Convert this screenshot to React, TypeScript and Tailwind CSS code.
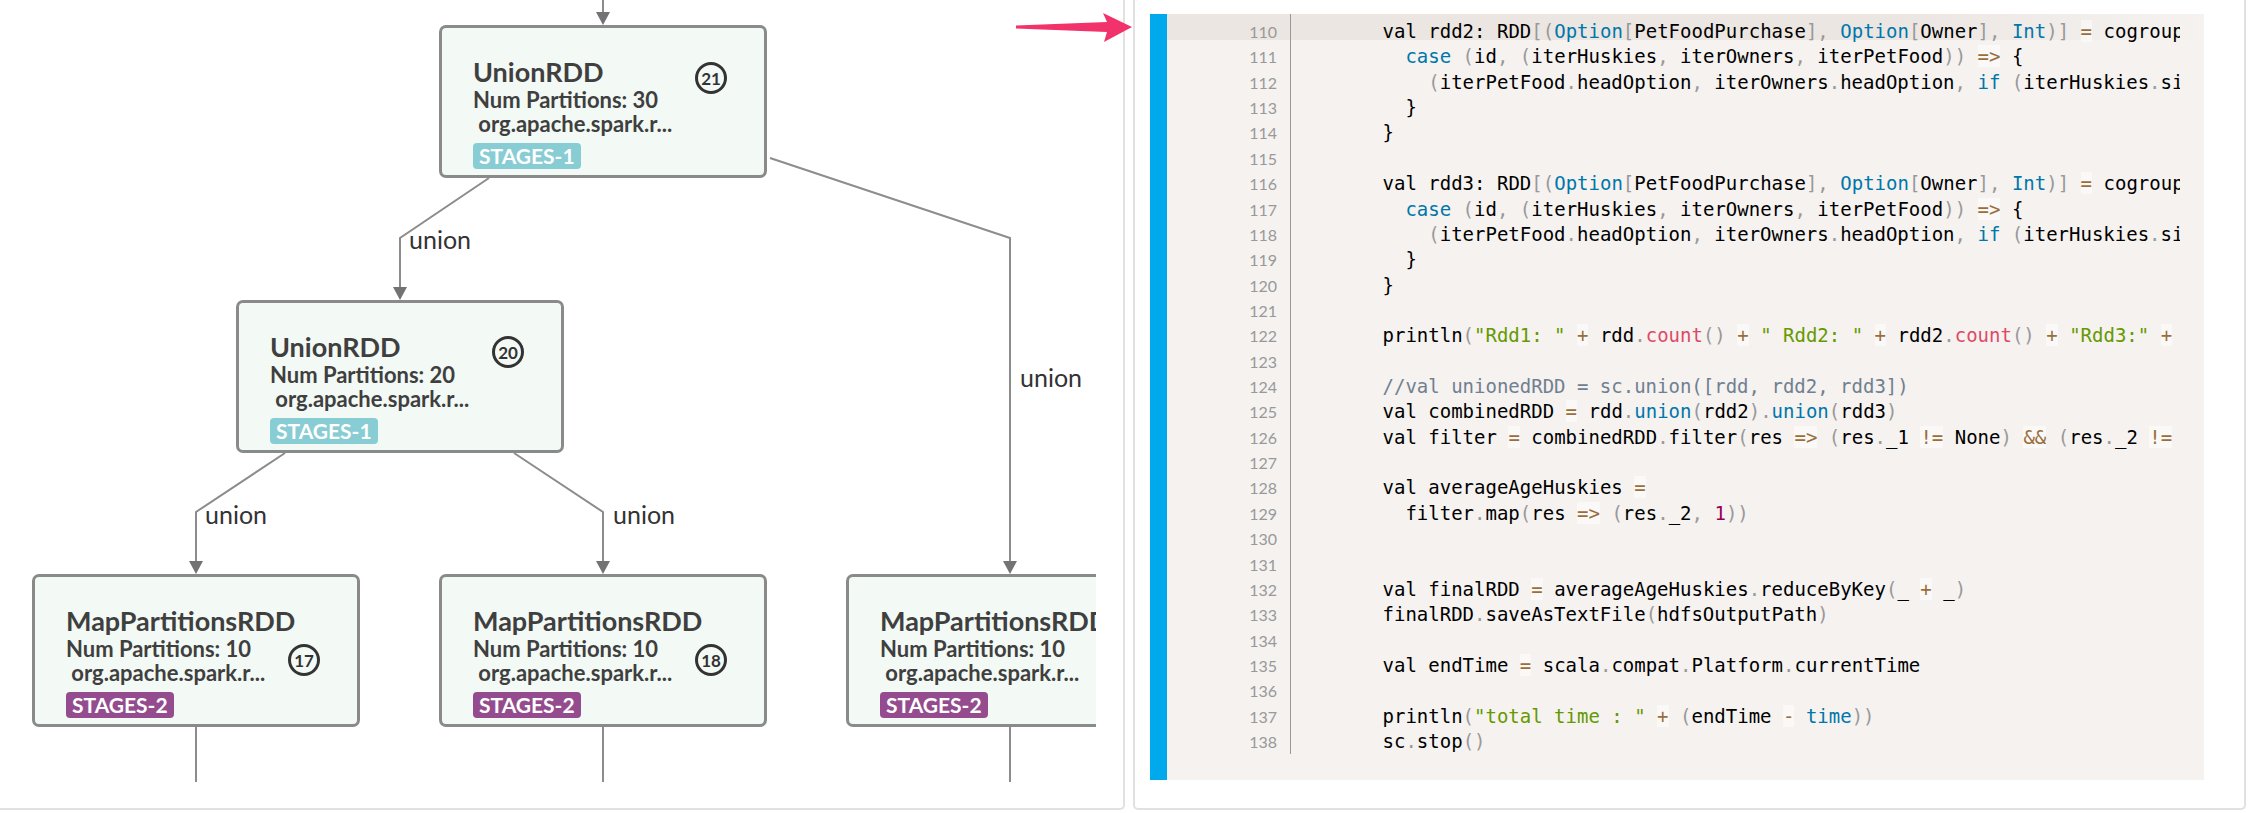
import React from "react"

type GraphNode = {
  x: number
  y: number
  title: string
  parts: number
  stage: 1 | 2
  num: number
  circleTop: number
}

const nodes: GraphNode[] = [
  { x: 439, y: 25, title: "UnionRDD", parts: 30, stage: 1, num: 21, circleTop: 34 },
  { x: 236, y: 300, title: "UnionRDD", parts: 20, stage: 1, num: 20, circleTop: 33 },
  { x: 32, y: 574, title: "MapPartitionsRDD", parts: 10, stage: 2, num: 17, circleTop: 67 },
  { x: 439, y: 574, title: "MapPartitionsRDD", parts: 10, stage: 2, num: 18, circleTop: 67 },
  { x: 846, y: 574, title: "MapPartitionsRDD", parts: 10, stage: 2, num: 16, circleTop: 67 },
]

const stageClass = {
  1: "bg-[#88ccd4]",
  2: "bg-[#944c8e]",
}

const edges = [
  "M603 0 V14",
  "M489 178 L400 238 L400 289",
  "M770 158 L1010 238 L1010 563",
  "M285 453 L196 512 L196 563",
  "M514 453 L603 512 L603 563",
  "M196 720 V782",
  "M603 720 V782",
  "M1010 720 V782",
]

const heads = [
  [603, 25],
  [400, 300],
  [196, 574],
  [603, 574],
  [1010, 574],
]

const labels = [
  [409, 249],
  [1020, 387],
  [205, 524],
  [613, 524],
]

const code = [
  "        val rdd2: RDD[(Option[PetFoodPurchase], Option[Owner], Int)] = cogroupedRDD.map {",
  "          case (id, (iterHuskies, iterOwners, iterPetFood)) => {",
  "            (iterPetFood.headOption, iterOwners.headOption, if (iterHuskies.size > 0) iterHuskies.head else None)",
  "          }",
  "        }",
  "",
  "        val rdd3: RDD[(Option[PetFoodPurchase], Option[Owner], Int)] = cogroupedRDD.map {",
  "          case (id, (iterHuskies, iterOwners, iterPetFood)) => {",
  "            (iterPetFood.headOption, iterOwners.headOption, if (iterHuskies.size > 0) iterHuskies.head else None)",
  "          }",
  "        }",
  "",
  '        println("Rdd1: " + rdd.count() + " Rdd2: " + rdd2.count() + "Rdd3:" + rdd3.count())',
  "",
  "        //val unionedRDD = sc.union([rdd, rdd2, rdd3])",
  "        val combinedRDD = rdd.union(rdd2).union(rdd3)",
  "        val filter = combinedRDD.filter(res => (res._1 != None) && (res._2 != None))",
  "",
  "        val averageAgeHuskies =",
  "          filter.map(res => (res._2, 1))",
  "",
  "",
  "        val finalRDD = averageAgeHuskies.reduceByKey(_ + _)",
  "        finalRDD.saveAsTextFile(hdfsOutputPath)",
  "",
  "        val endTime = scala.compat.Platform.currentTime",
  "",
  '        println("total time : " + (endTime - time))',
  "        sc.stop()",
]

const keywords = new Set(["case", "if", "Option", "Int", "union", "time"])
const funcs = new Set(["count"])

const tokenClass = {
  keyword: "text-[#07a]",
  func: "text-[#dd4a68]",
  string: "text-[#690]",
  number: "text-[#905]",
  operator: "text-[#9a6e3a] bg-white/50",
  punct: "text-[#999]",
  comment: "text-[#708090]",
  plain: "",
}

type Kind = keyof typeof tokenClass

function tokenize(line: string) {
  const out: { text: string; kind: Kind }[] = []
  const re = /(\/\/.*$)|("[^"]*")|([A-Za-z_][A-Za-z0-9_]*)|(\d+)|(=>|!=|&&|=|\+|-)|([()[\],.])|(\s+|.)/g
  let m: RegExpExecArray | null
  while ((m = re.exec(line))) {
    let kind: Kind = "plain"
    if (m[1]) kind = "comment"
    else if (m[2]) kind = "string"
    else if (m[3]) kind = keywords.has(m[3]) ? "keyword" : funcs.has(m[3]) ? "func" : "plain"
    else if (m[4]) kind = "number"
    else if (m[5]) kind = "operator"
    else if (m[6]) kind = "punct"
    out.push({ text: m[0], kind })
  }
  return out
}

function RddNode({ node }: { node: GraphNode }) {
  return (
    <div
      className="absolute w-[328px] h-[153px] rounded-[7px] border-[3px] border-[#8a8a8a] bg-[#f3f9f5] pl-[31px] pt-[28px] text-[#3f3f3f] font-['Lato',sans-serif] font-bold"
      style={{ left: node.x, top: node.y }}
    >
      <div className="text-[27px] leading-[31px] whitespace-nowrap">{node.title}</div>
      <div className="text-[22px] leading-[25px] whitespace-nowrap">Num Partitions: {node.parts}</div>
      <div className="text-[22px] leading-[24px] whitespace-pre"> org.apache.spark.r...</div>
      <div
        className={`mt-[7px] inline-block h-[26px] rounded-[4px] px-[6px] text-[21px] leading-[26px] text-white ${stageClass[node.stage]}`}
      >
        STAGES-{node.stage}
      </div>
      <div
        className="absolute left-[253px] flex h-[32px] w-[32px] items-center justify-center rounded-full border-[3px] border-[#333] text-[17px] leading-none text-[#333]"
        style={{ top: node.circleTop }}
      >
        {node.num}
      </div>
    </div>
  )
}

function Graph() {
  return (
    <div className="relative h-[782px] w-[1096px] overflow-hidden">
      <svg className="absolute left-0 top-0" width={1096} height={782}>
        {edges.map((d) => (
          <path key={d} d={d} fill="none" stroke="#8c8c8c" strokeWidth={2} />
        ))}
        {heads.map(([x, y]) => (
          <polygon key={`${x}-${y}`} points={`${x - 7},${y - 13} ${x + 7},${y - 13} ${x},${y}`} fill="#737373" />
        ))}
        {labels.map(([x, y]) => (
          <text key={`${x}-${y}`} x={x} y={y} fontFamily="Lato, sans-serif" fontSize={25} fill="#333">
            union
          </text>
        ))}
      </svg>
      {nodes.map((n) => (
        <RddNode key={n.num} node={n} />
      ))}
    </div>
  )
}

function CodeBlock() {
  return (
    <div className="flex h-[766px]">
      <div className="w-[17px] shrink-0 bg-[#00a9ec]" />
      <div className="relative min-w-0 flex-1 overflow-hidden bg-[#f5f2f0] pr-[24px]">
        <div className="absolute left-0 right-0 top-0 h-[26px] bg-[linear-gradient(to_right,rgba(153,125,102,0.1)_70%,rgba(153,125,102,0))]" />
        <div className="relative flex">
          <div className="w-[124px] shrink-0 border-r border-[#999] pr-[13px] pt-[5px] text-right font-['Lato',sans-serif] text-[16px] leading-[25.36px] text-[#999]">
            {code.map((_, i) => (
              <div key={i}>{110 + i}</div>
            ))}
          </div>
          <div className="min-w-0 flex-1 overflow-hidden pt-[5px] font-['DejaVu_Sans_Mono',monospace] text-[19px] leading-[25.36px] text-black">
            {code.map((line, i) => (
              <div key={i} className="h-[25.36px] whitespace-pre">
                {tokenize(line).map((t, j) => (
                  <span key={j} className={tokenClass[t.kind]}>
                    {t.text}
                  </span>
                ))}
              </div>
            ))}
          </div>
        </div>
      </div>
    </div>
  )
}

export default function App() {
  return (
    <div className="relative flex h-[813px] w-[2248px] overflow-hidden bg-white">
      <div className="h-[810px] w-[1125px] shrink-0 rounded-br-[5px] border-b-2 border-r-2 border-[#e1e1e1]">
        <Graph />
      </div>
      <div className="ml-[8px] h-[810px] w-[1113px] shrink-0 rounded-b-[5px] border-x-2 border-b-2 border-[#e1e1e1] pl-[15px] pr-[40px] pt-[14px]">
        <CodeBlock />
      </div>
      <svg className="absolute left-[1010px] top-[8px]" width={130} height={40} viewBox="1010 8 130 40">
        <path d="M1016 25.5 L1107 22 L1103 13 L1132 27 L1104 42 L1107 32 L1016 28.5 Z" fill="#f2336b" />
      </svg>
    </div>
  )
}
